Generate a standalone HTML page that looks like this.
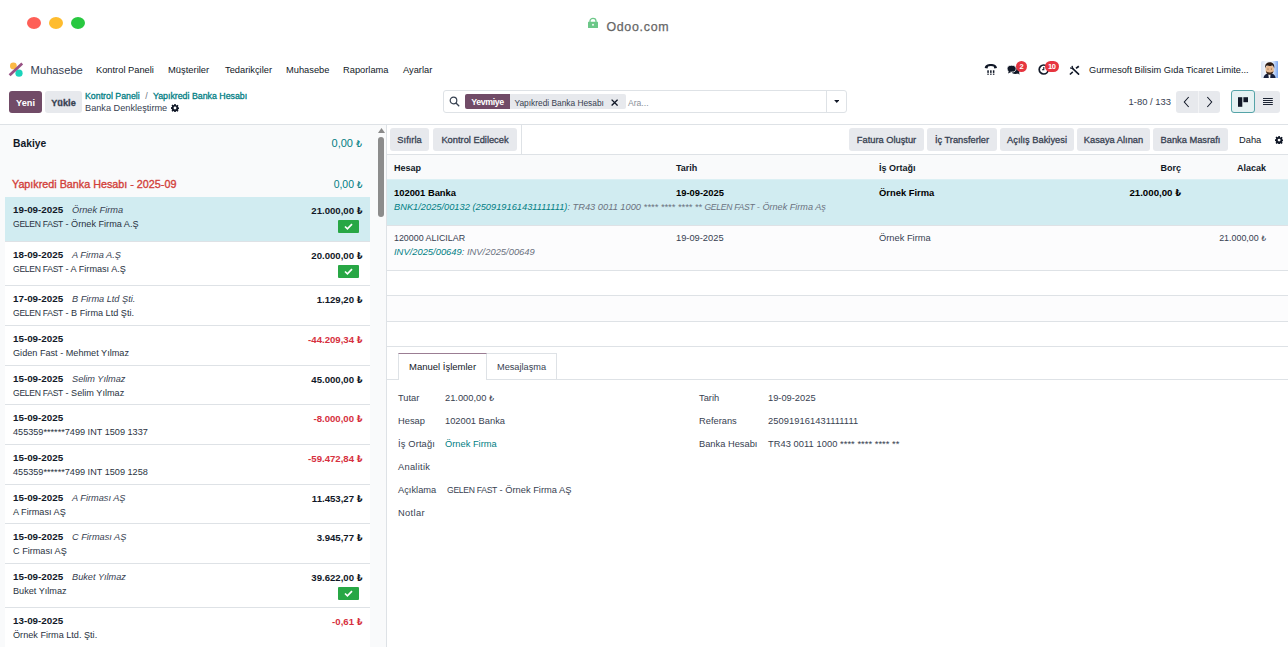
<!DOCTYPE html>
<html lang="tr">
<head>
<meta charset="utf-8">
<title>Odoo - Banka Denkleştirme</title>
<style>
*{box-sizing:border-box;margin:0;padding:0}
html,body{width:1288px;height:647px;overflow:hidden;background:#fff}
body{font-family:"Liberation Sans","DejaVu Sans",sans-serif;font-size:9.3px;color:#374151;position:relative}
.abs{position:absolute;white-space:nowrap}
.t{position:absolute;white-space:nowrap;line-height:12px;height:12px}
.b{font-weight:700}
.i{font-style:italic}
.teal{color:#017e84}
.red{color:#d23f3a}
.dark{color:#111827}
/* title bar */
.dot{position:absolute;top:17px;width:14px;height:12px;border-radius:50%}
/* buttons */
.btn{position:absolute;height:23px;border-radius:3px;background:#e7e9ed;color:#374151;-webkit-text-stroke:.3px #374151;text-align:center;line-height:25px;white-space:nowrap}
.btn.pri{background:#714b67;color:#fff;font-weight:700;-webkit-text-stroke:0}
/* left list */
.row{position:absolute;left:5px;width:365px;border-bottom:1px solid #dee2e6;background:#fff}
.row.sel{background:#d1ecf1}
.row .d{position:absolute;left:8px;top:7.400px;font-weight:700;color:#111827;font-size:9.8px;line-height:12px}
.row .p{position:absolute;left:67px;top:7.400px;font-style:italic;color:#374151;font-size:9.200px;line-height:12px}
.row .n{position:absolute;left:8px;top:21.100px;color:#293241;font-size:9.150px;line-height:12px}
.row .a{position:absolute;right:7.600px;top:7.700px;font-weight:700;color:#111827;font-size:9.600px;line-height:12px}
.row .a.red{color:#d63040}
.l{font-size:.86em}
.c{font-size:8.600px;letter-spacing:-.3px}
.chk{position:absolute;right:11.200px;top:23px;width:21px;height:13px;background:#28a745;border-radius:1px}
.chk svg{position:absolute;left:6px;top:3px;width:9px;height:7px}
/* table */
.hl{position:absolute;left:387px;right:0;height:1px;background:#dee2e6}
</style>
</head>
<body>
<!-- ===== browser title bar ===== -->
<div class="dot" style="left:27px;background:#fe5f57"></div>
<div class="dot" style="left:49px;background:#febc2e"></div>
<div class="dot" style="left:71px;background:#28c840"></div>
<svg class="abs" style="left:587px;top:17px" width="12" height="12" viewBox="0 0 12 12"><path d="M3 5V4.100a3 2.800 0 0 1 6 0V5" fill="none" stroke="#6cc788" stroke-width="1.300"/><rect x="1" y="4.700" width="10" height="6.200" rx=".5" fill="#6cc788"/><rect x="5.200" y="6.900" width="1.600" height="1.700" fill="#fff"/></svg>
<div class="t" style="left:606.400px;top:21.200px;font-size:12.4px;color:#666;-webkit-text-stroke:.25px #666;letter-spacing:.72px">Odoo.com</div>

<!-- ===== navbar ===== -->
<svg class="abs" style="left:8px;top:62px" width="17" height="17" viewBox="0 0 17 17">
<circle cx="5.400" cy="3.900" r="3.400" fill="#fbb945"/>
<circle cx="11" cy="11.200" r="3.600" fill="#1ad3bb"/>
<path d="M1.600 13.300L14.200 1.500" stroke="#985184" stroke-width="2.700" stroke-linecap="butt"/>
</svg>
<div class="t" style="left:30.600px;top:64px;font-size:11.2px;color:#374151">Muhasebe</div>
<div class="t dark" style="left:96px;top:64px">Kontrol Paneli</div>
<div class="t dark" style="left:168px;top:64px;font-size:9.400px">Müşteriler</div>
<div class="t dark" style="left:225px;top:64px">Tedarikçiler</div>
<div class="t dark" style="left:286px;top:64px">Muhasebe</div>
<div class="t dark" style="left:343px;top:64px">Raporlama</div>
<div class="t dark" style="left:403px;top:64px">Ayarlar</div>

<!-- systray -->
<svg class="abs" style="left:984px;top:63px" width="14" height="14" viewBox="0 0 14 14">
<path d="M.8 4.600C.8 2.300 3.500.9 6.850.9s6.050 1.400 6.050 3.700v.5l-2.600.5-.6-2c-1.300-.75-4.300-.75-5.600 0l-.6 2L.8 5.100z" fill="#111827"/>
<g fill="#111827"><rect x="3.300" y="7.300" width="1.500" height="2.600"/><rect x="6.100" y="7.300" width="1.500" height="2.600"/><rect x="8.900" y="7.300" width="1.500" height="2.600"/><rect x="3.300" y="10.600" width="1.500" height="1.200"/><rect x="6.100" y="10.600" width="1.500" height="1.200"/><rect x="8.900" y="10.600" width="1.500" height="1.200"/></g>
</svg>
<svg class="abs" style="left:1007px;top:64px" width="14" height="12" viewBox="0 0 14 12">
<ellipse cx="8.400" cy="6.900" rx="3.900" ry="3" fill="#111827"/><path d="M10.200 8.800l2.300 2-.4-3z" fill="#111827"/>
<ellipse cx="4.600" cy="4.700" rx="4.500" ry="3.400" fill="#111827" stroke="#fff" stroke-width=".8"/><path d="M2 6.500L1 9.600l3.300-1.700z" fill="#111827"/>
</svg>
<div class="abs" style="left:1016px;top:61px;width:11px;height:11px;border-radius:5.500px;background:#e6353f;color:#fff;font-size:7.500px;font-weight:700;line-height:11px;text-align:center">2</div>
<svg class="abs" style="left:1037.600px;top:64px" width="11" height="11" viewBox="0 0 11 11"><circle cx="5.700" cy="5.500" r="4.500" fill="none" stroke="#111827" stroke-width="1.700"/><path d="M5.800 3V5.800H4" fill="none" stroke="#111827" stroke-width="1.100"/></svg>
<div class="abs" style="left:1045px;top:61px;width:14px;height:11px;border-radius:5.500px;background:#e6353f;color:#fff;font-size:7.500px;font-weight:700;line-height:11px;text-align:center;letter-spacing:-.5px;text-indent:-.5px">10</div>
<svg class="abs" style="left:1069px;top:64.500px" width="11" height="11" viewBox="0 0 11 11"><g stroke="#111827" fill="none"><path d="M4 3.800L9.600 9.200" stroke-width="1.600" stroke-linecap="round"/><path d="M1.100 2.900l2 .4 1.100.7-.6-1.200L3 .9" stroke-width="1.300" stroke-linejoin="round"/><path d="M9.800 1.200L7 3.400" stroke-width="1.800"/><path d="M3.800 6.900L.9 9.500" stroke-width="1.500"/></g></svg>
<div class="t dark" style="left:1089px;top:64px;font-size:9.210px">Gurmesoft Bilisim Gıda Ticaret Limite...</div>
<!-- avatar -->
<svg class="abs" style="left:1260.500px;top:60.800px" width="17.600" height="17.700" viewBox="0 0 17.600 17.700">
<defs><linearGradient id="avbg" x1="0" x2="1" y1="0" y2="0"><stop offset="0" stop-color="#d9e3f3"/><stop offset=".3" stop-color="#f4f7fc"/><stop offset=".62" stop-color="#eef4fd"/><stop offset="1" stop-color="#6f9ff0"/></linearGradient></defs>
<rect width="17.600" height="17.700" rx="1.800" fill="url(#avbg)"/>
<path d="M2.400 17.700c.2-3 1.700-4.600 4.200-5.200h4c2.500.6 3.900 2.200 4.100 5.200z" fill="#161f3c"/>
<path d="M7.300 13.300h2.300l-.5 4.400H7.900z" fill="#f5f5f7"/>
<rect x="4.600" y="4.600" width="8.200" height="8.300" rx="3.600" fill="#e8b88e"/>
<path d="M5 9.800c.1 2.500 1.500 3.900 3.700 3.900s3.600-1.400 3.700-3.900c-.5 1.300-1.500 1.600-3.700 1.600S5.500 11.100 5 9.800z" fill="#3a261b"/>
<path d="M4.300 7.500C3.300 3.500 5.600 1.300 8.700 1.300s5.400 2.200 4.400 6.200c-.3-1.800-1-2.600-1.700-2.900-1.700.5-3.700.5-5.400 0-.7.300-1.400 1.100-1.700 2.900z" fill="#2b1a12"/>
<circle cx="7" cy="8" r=".55" fill="#5b4a3f"/><circle cx="10.400" cy="8" r=".55" fill="#5b4a3f"/>
</svg>

<!-- ===== control panel ===== -->
<div class="btn pri" style="left:9px;top:91px;width:33px;height:22px;line-height:24px;font-size:9.200px">Yeni</div>
<div class="btn" style="left:45px;top:91px;width:37px;height:22px;line-height:24px;font-size:9.200px;font-weight:700;color:#374151">Yükle</div>
<div class="t teal" style="left:85px;top:90px;font-size:8.800px;-webkit-text-stroke:.3px #017e84">Kontrol Paneli <span style="color:#6b7280;-webkit-text-stroke:0;padding:0 3px">/</span> Yapıkredi Banka Hesabı</div>
<div class="t" style="left:85px;top:102px;font-size:9.200px;color:#374151">Banka Denkleştirme</div>
<svg class="abs" style="left:171.400px;top:104px" width="8" height="8" viewBox="0 0 16 16"><path fill="#111827" fill-rule="evenodd" d="M6.600 0h2.800l.4 2.200 1.300.55 1.850-1.250 2 2-1.250 1.850.55 1.300 2.200.4v2.800l-2.200.4-.55 1.300 1.250 1.850-2 2-1.850-1.250-1.300.55-.4 2.200H6.600l-.4-2.200-1.300-.55-1.850 1.250-2-2 1.250-1.850-.55-1.300L-.45 9.400V6.600l2.200-.4.55-1.300L1.050 3.050l2-2L4.900 2.300l1.300-.55zM8 5.200a2.800 2.800 0 1 0 0 5.600 2.800 2.800 0 0 0 0-5.600z"/></svg>

<!-- search -->
<div class="abs" style="left:443px;top:90px;width:404px;height:23px;border:1px solid #dee2e6;border-radius:3px;background:#fff"></div>
<div class="abs" style="left:826px;top:91px;width:1px;height:21px;background:#dee2e6"></div>
<svg class="abs" style="left:449px;top:96px" width="11" height="11" viewBox="0 0 11 11"><circle cx="4.500" cy="4.500" r="3.300" fill="none" stroke="#374151" stroke-width="1.200"/><path d="M7 7l3.200 3.200" stroke="#374151" stroke-width="1.300"/></svg>
<div class="abs" style="left:465px;top:94px;width:45px;height:15px;background:#714b67;border-radius:2px 0 0 2px;color:#fff;font-weight:700;font-size:8.800px;letter-spacing:-.38px;line-height:17px;text-align:center">Yevmiye</div>
<div class="abs" style="left:510px;top:94px;width:116px;height:15px;background:#e7e9ed;border-radius:0 2px 2px 0"></div>
<div class="t" style="left:514.500px;top:96.600px;font-size:8.350px;color:#374151">Yapıkredi Banka Hesabı</div>
<svg class="abs" style="left:611px;top:98.500px" width="7.200" height="7.200" viewBox="0 0 7 7"><path d="M.6.600l5.800 5.800M6.400.600L.6 6.400" stroke="#111827" stroke-width="1.300"/></svg>
<div class="t" style="left:628px;top:96.500px;font-size:8.600px;color:#8a909a">Ara...</div>
<svg class="abs" style="left:833.500px;top:100px" width="5.500" height="3" viewBox="0 0 7 4"><path d="M0 0h7L3.500 4z" fill="#111827"/></svg>

<!-- pager -->
<div class="t" style="left:1128.500px;top:96.400px;font-size:9.450px;color:#374151">1-80 / 133</div>
<div class="abs" style="left:1176px;top:91px;width:44px;height:22px;border-radius:3px;background:#e7e9ed"></div>
<div class="abs" style="left:1198px;top:91px;width:1px;height:22px;background:#f3f4f6"></div>
<svg class="abs" style="left:1183px;top:96px" width="7" height="12" viewBox="0 0 7 12"><path d="M5.700 1L1.300 6l4.400 5" fill="none" stroke="#111827" stroke-width="1.050"/></svg>
<svg class="abs" style="left:1206px;top:96px" width="7" height="12" viewBox="0 0 7 12"><path d="M1.300 1l4.400 5-4.400 5" fill="none" stroke="#111827" stroke-width="1.050"/></svg>
<div class="abs" style="left:1231px;top:91px;width:49px;height:22px;border-radius:3px;background:#e7e9ed"></div>
<div class="abs" style="left:1231px;top:90px;width:24px;height:23px;border-radius:3px;background:#e6f2f3;border:1.300px solid #55a4a8"></div>
<svg class="abs" style="left:1238px;top:97px" width="10.200" height="10" viewBox="0 0 10.200 10"><rect x="0" y=".2" width="4.300" height="9.600" fill="#111827"/><rect x="5.400" y=".2" width="4.800" height="5" fill="#111827"/></svg>
<svg class="abs" style="left:1263px;top:98px" width="10" height="8" viewBox="0 0 10 8"><path d="M0 .5h9.800M0 2.500h9.800M0 4.500h9.800M0 6.500h9.800" stroke="#1c2433" stroke-width="1.100"/></svg>

<div class="abs" style="left:0;top:124px;width:1288px;height:1px;background:#dee2e6"></div>

<!-- ===== left panel ===== -->
<div class="abs" style="left:0;top:125px;width:386px;height:522px;background:#f9fafb"></div>
<div class="t b dark" style="left:13px;top:138.300px;font-size:10.300px">Bakiye</div>
<div class="t teal" style="right:926px;top:136.800px;font-size:11px">0,00 <span class="l">₺</span></div>
<div class="t" style="left:12px;top:178px;font-size:10.780px;color:#d23f3a;-webkit-text-stroke:.35px #d23f3a">Yapıkredi Banka Hesabı - 2025-09</div>
<div class="t teal" style="right:925.500px;top:179px;font-size:10.400px">0,00 <span class="l">₺</span></div>

<div class="row sel" style="top:197px;height:45px"><span class="d">19-09-2025</span><span class="p">Örnek Firma</span><span class="n"><span class="c">GELEN FAST</span> - Örnek Firma A.Ş</span><span class="a">21.000,00 <span class="l">₺</span></span><span class="chk"><svg viewBox="0 0 9 7"><path d="M1 3.500l2.400 2.300L8 1.200" fill="none" stroke="#fff" stroke-width="1.700"/></svg></span></div>
<div class="row" style="top:242px;height:44px"><span class="d">18-09-2025</span><span class="p">A Firma A.Ş</span><span class="n"><span class="c">GELEN FAST</span> - A Firması A.Ş</span><span class="a">20.000,00 <span class="l">₺</span></span><span class="chk"><svg viewBox="0 0 9 7"><path d="M1 3.500l2.400 2.300L8 1.200" fill="none" stroke="#fff" stroke-width="1.700"/></svg></span></div>
<div class="row" style="top:286px;height:40px"><span class="d">17-09-2025</span><span class="p">B Firma Ltd Şti.</span><span class="n"><span class="c">GELEN FAST</span> - B Firma Ltd Şti.</span><span class="a">1.129,20 <span class="l">₺</span></span></div>
<div class="row" style="top:326px;height:40px"><span class="d">15-09-2025</span><span class="n">Giden Fast - Mehmet Yılmaz</span><span class="a red">-44.209,34 <span class="l">₺</span></span></div>
<div class="row" style="top:366px;height:39px"><span class="d">15-09-2025</span><span class="p">Selim Yılmaz</span><span class="n"><span class="c">GELEN FAST</span> - Selim Yılmaz</span><span class="a">45.000,00 <span class="l">₺</span></span></div>
<div class="row" style="top:405px;height:40px"><span class="d">15-09-2025</span><span class="n">455359******7499 INT 1509 1337</span><span class="a red">-8.000,00 <span class="l">₺</span></span></div>
<div class="row" style="top:445px;height:40px"><span class="d">15-09-2025</span><span class="n">455359******7499 INT 1509 1258</span><span class="a red">-59.472,84 <span class="l">₺</span></span></div>
<div class="row" style="top:485px;height:39px"><span class="d">15-09-2025</span><span class="p">A Firması AŞ</span><span class="n">A Firması AŞ</span><span class="a">11.453,27 <span class="l">₺</span></span></div>
<div class="row" style="top:524px;height:40px"><span class="d">15-09-2025</span><span class="p">C Firması AŞ</span><span class="n">C Firması AŞ</span><span class="a">3.945,77 <span class="l">₺</span></span></div>
<div class="row" style="top:564px;height:44px"><span class="d">15-09-2025</span><span class="p">Buket Yılmaz</span><span class="n">Buket Yılmaz</span><span class="a">39.622,00 <span class="l">₺</span></span><span class="chk"><svg viewBox="0 0 9 7"><path d="M1 3.500l2.400 2.300L8 1.200" fill="none" stroke="#fff" stroke-width="1.700"/></svg></span></div>
<div class="row" style="top:608px;height:40px"><span class="d">13-09-2025</span><span class="n">Örnek Firma Ltd. Şti.</span><span class="a red">-0,61 <span class="l">₺</span></span></div>

<!-- scrollbar -->
<svg class="abs" style="left:378px;top:128px" width="7" height="5" viewBox="0 0 7 5"><path d="M0 5h7L3.500 0z" fill="#8a8a8a"/></svg>
<div class="abs" style="left:378px;top:137px;width:5.500px;height:80px;border-radius:3px;background:#8c8c8c"></div>

<!-- ===== right panel ===== -->
<div class="abs" style="left:386px;top:125px;width:1px;height:522px;background:#dee2e6"></div>
<div class="abs" style="left:387px;top:125px;width:901px;height:522px;background:#fff"></div>

<div class="btn" style="left:390px;top:128px;width:39px">Sıfırla</div>
<div class="btn" style="left:433px;top:128px;width:84px">Kontrol Edilecek</div>
<div class="abs" style="left:521px;top:125px;width:1px;height:30px;background:#dee2e6"></div>
<div class="btn" style="left:849px;top:128px;width:75px">Fatura Oluştur</div>
<div class="btn" style="left:927px;top:128px;width:70px">İç Transferler</div>
<div class="btn" style="left:1000px;top:128px;width:74px">Açılış Bakiyesi</div>
<div class="btn" style="left:1077px;top:128px;width:73px">Kasaya Alınan</div>
<div class="btn" style="left:1153px;top:128px;width:75px">Banka Masrafı</div>
<div class="t dark" style="left:1239px;top:134px">Daha</div>
<svg class="abs" style="left:1275.300px;top:135.500px" width="8.200" height="8.200" viewBox="0 0 16 16"><path fill="#111827" fill-rule="evenodd" d="M6.600 0h2.800l.4 2.200 1.300.55 1.850-1.250 2 2-1.250 1.850.55 1.300 2.200.4v2.800l-2.200.4-.55 1.300 1.250 1.850-2 2-1.850-1.250-1.300.55-.4 2.200H6.600l-.4-2.200-1.300-.55-1.850 1.250-2-2 1.250-1.850-.55-1.300L-.45 9.400V6.600l2.200-.4.55-1.300L1.050 3.050l2-2L4.900 2.300l1.300-.55zM8 5.200a2.800 2.800 0 1 0 0 5.600 2.800 2.800 0 0 0 0-5.600z"/></svg>

<!-- table -->
<div class="hl" style="top:154px"></div>
<div class="abs" style="left:387px;top:155px;width:901px;height:25px;background:#f9fafb"></div>
<div class="t b dark" style="left:394px;top:161.700px;font-size:9px">Hesap</div>
<div class="t b dark" style="left:676px;top:161.700px;font-size:9px">Tarih</div>
<div class="t b dark" style="left:879px;top:161.700px;font-size:9px">İş Ortağı</div>
<div class="t b dark" style="right:107px;top:161.700px;font-size:9px">Borç</div>
<div class="t b dark" style="right:22px;top:161.700px;font-size:9px">Alacak</div>
<svg class="abs" style="left:387px;top:179px" width="901" height="47" viewBox="0 0 901 47"><rect x="0" y=".3" width="901" height="45.700" fill="#d1ecf1"/></svg>
<div class="t b" style="left:394px;top:187px;color:#000;font-size:9.400px">102001 Banka</div>
<div class="t b" style="left:676px;top:187px;color:#000;font-size:9.400px">19-09-2025</div>
<div class="t b" style="left:879px;top:187px;color:#000;font-size:9.400px">Örnek Firma</div>
<div class="t b" style="right:107px;top:187px;color:#000;font-size:9.700px">21.000,00 <span class="l">₺</span></div>
<div class="t i" style="left:394px;top:201px;font-size:9.290px;color:#6b7280"><span class="teal">BNK1/2025/00132 (250919161431111111)</span>: TR43 0011 1000 **** **** **** ** <span style="font-size:9.100px"><span class="c">GELEN FAST</span> - Örnek Firma Aş</span></div>
<div class="hl" style="top:225px"></div>
<div class="abs" style="left:387px;top:226px;width:901px;height:44px;background:#fcfcfd"></div>
<div class="t" style="left:394px;top:232px;color:#374151;font-size:8.900px">120000 ALICILAR</div>
<div class="t" style="left:676px;top:232px;color:#374151">19-09-2025</div>
<div class="t" style="left:879px;top:232px;color:#374151">Örnek Firma</div>
<div class="t" style="right:22px;top:232px;color:#374151;font-size:8.900px">21.000,00 <span class="l">₺</span></div>
<div class="t i" style="left:394px;top:246px;font-size:9.400px;color:#6b7280"><span class="teal">INV/2025/00649</span>: INV/2025/00649</div>
<div class="hl" style="top:270px"></div>
<div class="hl" style="top:295px"></div>
<div class="abs" style="left:387px;top:296px;width:901px;height:25px;background:#fcfcfd"></div>
<div class="hl" style="top:321px"></div>
<div class="hl" style="top:346px"></div>

<!-- notebook -->
<div class="hl" style="top:379px"></div>
<div class="abs" style="left:398px;top:353px;width:89px;height:27px;background:#fff;border:1px solid #dee2e6;border-bottom:0;border-top:1px solid #9b7d93"></div>
<div class="abs" style="left:487px;top:353px;width:70px;height:26px;background:#fff;border:1px solid #dee2e6;border-bottom:0;border-left:0"></div>
<div class="t dark" style="left:409px;top:361px;font-size:9.500px">Manuel İşlemler</div>
<div class="t" style="left:497px;top:361px;font-size:9.200px;color:#374151">Mesajlaşma</div>

<div class="t" style="left:398px;top:392px">Tutar</div>
<div class="t" style="left:445px;top:392px">21.000,00 <span class="l">₺</span></div>
<div class="t" style="left:398px;top:415px">Hesap</div>
<div class="t" style="left:445px;top:415px">102001 Banka</div>
<div class="t" style="left:398px;top:438px;letter-spacing:.15px">İş Ortağı</div>
<div class="t teal" style="left:445px;top:438px">Örnek Firma</div>
<div class="t" style="left:398px;top:461px;letter-spacing:.27px">Analitik</div>
<div class="t" style="left:398px;top:484px">Açıklama</div>
<div class="t" style="left:447px;top:484px"><span class="c">GELEN FAST</span> - Örnek Firma AŞ</div>
<div class="t" style="left:398px;top:507px;letter-spacing:.35px">Notlar</div>

<div class="t" style="left:699px;top:392px">Tarih</div>
<div class="t" style="left:768px;top:392px">19-09-2025</div>
<div class="t" style="left:699px;top:415px">Referans</div>
<div class="t" style="left:768px;top:415px;letter-spacing:.07px">250919161431111111</div>
<div class="t" style="left:699px;top:438px">Banka Hesabı</div>
<div class="t" style="left:768px;top:438px;letter-spacing:.06px">TR43 0011 1000 **** **** **** **</div>
</body>
</html>
